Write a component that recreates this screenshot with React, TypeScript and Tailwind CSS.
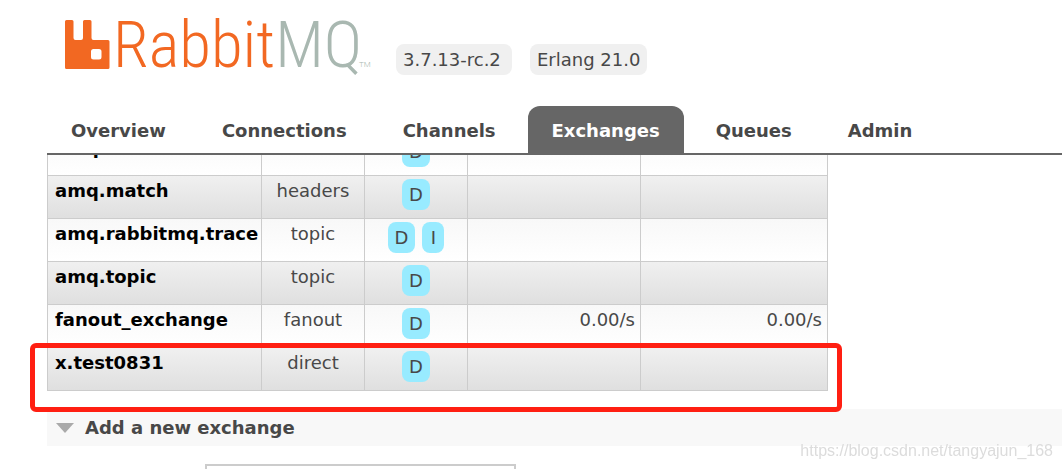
import { useState } from 'react';

type Exchange = {
  name: string;
  type: string;
  features: string[];
  rateIn?: string;
  rateOut?: string;
};

const TABS = ['Overview', 'Connections', 'Channels', 'Exchanges', 'Queues', 'Admin'];

const EXCHANGES: Exchange[] = [
  { name: 'amq.headers', type: 'headers', features: ['D'] },
  { name: 'amq.match', type: 'headers', features: ['D'] },
  { name: 'amq.rabbitmq.trace', type: 'topic', features: ['D', 'I'] },
  { name: 'amq.topic', type: 'topic', features: ['D'] },
  { name: 'fanout_exchange', type: 'fanout', features: ['D'], rateIn: '0.00/s', rateOut: '0.00/s' },
  { name: 'x.test0831', type: 'direct', features: ['D'] },
];

function Logo() {
  return (
    <a href="#/" aria-label="RabbitMQ" className="block">
      <svg width="308" height="61" viewBox="0 0 308 61" className="block overflow-visible">
        <path
          fill="#f26822"
          fillRule="evenodd"
          d="M1.5 6H7Q8.500 6 8.500 7.500V24Q8.500 26 10.500 26H16Q18 26 18 24V7.500Q18 6 19.500 6H25Q26.500 6 26.500 7.500V24Q26.500 26 28.500 26H43Q44.500 26 44.500 27.500V53.500Q44.500 55 43 55H1.500Q0 55 0 53.500V7.500Q0 6 1.500 6ZM28.500 35Q26 35 26 37.500V43Q26 45.500 28.500 45.500H34Q36.500 45.500 36.500 43V37.500Q36.500 35 34 35Z"
        />
        <text x="48" y="53" fontSize="65" className="fill-[#f26822] font-['Roboto_Condensed','Roboto',sans-serif] font-light">
          Rabbit<tspan className="fill-[#a9b8b1]">MQ</tspan>
        </text>
        <text x="294" y="53" fontSize="8" className="fill-[#a9b8b1] font-['Roboto',sans-serif] font-light">
          TM
        </text>
      </svg>
    </a>
  );
}

export default function App() {
  const [activeTab, setActiveTab] = useState('Exchanges');
  const [formOpen, setFormOpen] = useState(true);

  return (
    <div className="h-screen overflow-hidden bg-white font-['Verdana','DejaVu_Sans',sans-serif] text-lg leading-[25px] text-[#484848]">
      <header className="ml-[47px] border-b-2 border-[#666]">
        <div className="flex items-end gap-[23px] pt-[14px] pl-[18px]">
          <Logo />
          <ul className="flex gap-[18px]">
            <li className="min-w-[116px] rounded-lg bg-[#f0f0f0] px-[7px] py-[3px]">3.7.13-rc.2</li>
            <li className="min-w-[116px] rounded-lg bg-[#f0f0f0] px-[7px] py-[3px]">Erlang 21.0</li>
          </ul>
        </div>
        <nav className="mt-[31px] flex gap-2">
          {TABS.map(tab => (
            <button
              key={tab}
              onClick={() => setActiveTab(tab)}
              className={`rounded-t-xl px-6 pt-3 pb-[10px] font-bold ${
                tab === activeTab ? 'bg-[#666] text-white' : 'text-[#484848]'
              }`}
            >
              {tab}
            </button>
          ))}
        </nav>
      </header>

      <main className="overflow-hidden pl-[47px]">
        {/* List is scrolled part of a row under the header */}
        <div className="relative -mt-[23px] w-[781px]">
          <table className="w-full table-fixed border-collapse">
            <colgroup>
              <col className="w-[214px]" />
              <col className="w-[103px]" />
              <col className="w-[103px]" />
              <col className="w-[173px]" />
              <col />
            </colgroup>
            <tbody>
              {EXCHANGES.map((ex, i) => (
                <tr
                  key={ex.name}
                  className={`h-[43px] bg-linear-to-b [&>td]:border [&>td]:border-[#ccc] [&>td]:align-top ${
                    i % 2 ? 'from-[#f0f0f0] to-[#dfdfdf]' : 'from-[#f8f8f8] to-white'
                  }`}
                >
                  <td className="px-[7px] pt-[2px] font-bold whitespace-nowrap text-black">
                    <a href={`#/exchanges/${ex.name}`}>{ex.name}</a>
                  </td>
                  <td className="pt-[2px] text-center">{ex.type}</td>
                  <td className="pt-[3px]">
                    <div className="flex justify-center gap-[7px]">
                      {ex.features.map(f => (
                        <span key={f} className="min-w-[22px] rounded-lg bg-[#98ebff] px-[7px] py-[3px] text-center">
                          {f}
                        </span>
                      ))}
                    </div>
                  </td>
                  <td className="px-[5px] pt-[2px] text-right">{ex.rateIn}</td>
                  <td className="px-[5px] pt-[2px] text-right">{ex.rateOut}</td>
                </tr>
              ))}
            </tbody>
          </table>
          {/* Highlight around the last row */}
          <div className="pointer-events-none absolute -right-[14px] -bottom-[21px] -left-[17px] h-[69px] rounded-md border-5 border-[#ff1f12]" />
        </div>

        <section className="mt-[18px]">
          <h2>
            <button
              onClick={() => setFormOpen(!formOpen)}
              className="flex w-full items-center gap-[11px] bg-[#f8f8f8] px-[9px] py-[6px] text-left font-bold"
            >
              <svg width="18" height="10" viewBox="0 0 18 10" className={formOpen ? '' : '-rotate-90'}>
                <path d="M0 0H18L9 10Z" fill="#aaa" />
              </svg>
              Add a new exchange
            </button>
          </h2>
          {formOpen && (
            <form className="mt-[18px] pl-[158px]">
              <input
                type="text"
                aria-label="Name"
                className="block h-9 w-[311px] border-2 border-[#ccc] bg-white px-2"
              />
            </form>
          )}
        </section>
      </main>

      <p className="fixed right-[9px] bottom-[6px] font-['Liberation_Sans',sans-serif] text-base text-[#dcdcdc]">
        https://blog.csdn.net/tangyajun_168
      </p>
    </div>
  );
}
